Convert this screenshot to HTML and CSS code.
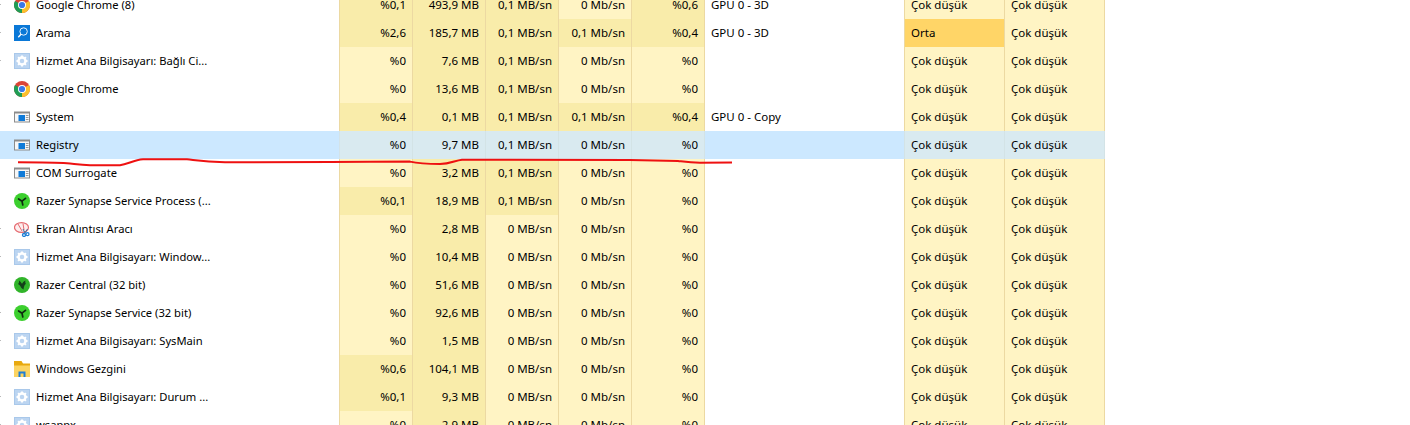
FILE: index.html
```html
<!DOCTYPE html>
<html lang="tr">
<head>
<meta charset="utf-8">
<title>Görev Yöneticisi</title>
<link rel="stylesheet" href="styles.css">
</head>
<body>
<svg class="defs" width="0" height="0" aria-hidden="true">
  <symbol id="i-chrome" viewBox="0 0 16 16">
    <circle cx="8" cy="8" r="8" fill="#db4437"/>
    <path d="M8 8 1.07 4A8 8 0 0 0 8 16Z" fill="#1f9d55"/>
    <path d="M8 8V16A8 8 0 0 0 14.93 4Z" fill="#fbc02d"/>
    <circle cx="8" cy="8" r="4" fill="#fff"/>
    <circle cx="8" cy="8" r="3.100" fill="#3b78e7"/>
  </symbol>
  <symbol id="i-search" viewBox="0 0 16 16">
    <rect width="16" height="16" fill="#0a78d7"/>
    <circle cx="9.600" cy="6.500" r="3.700" fill="none" stroke="#e6f2fc" stroke-width="1"/>
    <path d="M7 9.300 4.300 12.200" stroke="#fff" stroke-width="1.300"/>
  </symbol>
  <symbol id="i-gear" viewBox="0 0 16 16">
    <rect width="16" height="16" fill="#a9c8ea"/>
    <rect x="1" y="1" width="14" height="14" fill="#bcd5f1"/>
    <circle cx="8" cy="8" r="3.500" fill="none" stroke="#fff" stroke-width="2.400"/>
    <path d="M8 2.500V5M8 11V13.500M2.500 8H5M11 8H13.500M4.100 4.100 5.900 5.900M10.100 10.100 11.900 11.900M11.900 4.100 10.100 5.900M5.900 10.100 4.100 11.900" stroke="#fff" stroke-width="1.900"/>
  </symbol>
  <symbol id="i-window" viewBox="0 0 16 16">
    <rect y="2.500" width="16" height="11" fill="#8c8c8c"/>
    <rect x="1" y="4.500" width="14" height="8" fill="#f7f7f7"/>
    <rect x="4.500" y="6" width="6.500" height="6" fill="#0f7ad8"/>
    <path d="M11.800 6.500H14.500M11.800 8.500H14.500M11.800 10.500H14.500" stroke="#9a9a9a" stroke-width="1"/>
  </symbol>
  <symbol id="i-synapse" viewBox="0 0 16 16">
    <circle cx="8" cy="8" r="8" fill="#3ccf2e"/>
    <path d="M8 8.200 4.600 6M8 8.200 11.500 5.300M8 8.200 8.800 12" stroke="#0e2a10" stroke-width="1.700" stroke-linecap="round"/>
  </symbol>
  <symbol id="i-central" viewBox="0 0 16 16">
    <circle cx="8" cy="8" r="8" fill="#31b42a"/>
    <path d="M5 3.500C7 5 7.500 6 8 6.800 8.700 5.500 9.500 4.500 11.500 3.500 11 5 11.500 6.500 12 7 10.500 7.500 10 9 9.500 12.500 8.500 11.800 7.500 11 7 10.500 6.500 9 5.500 8 4 7 5 6 5.200 5 5 3.500Z" fill="#14401a"/>
  </symbol>
  <symbol id="i-snip" viewBox="0 0 16 16">
    <ellipse cx="7.500" cy="6.500" rx="7" ry="4.800" fill="#fdeeee" stroke="#e56a70" stroke-width="1.200"/>
    <path d="M4 3 8 10M9 2.500 10 9" stroke="#e56a70" stroke-width="1"/>
    <path d="M9 8 11 12M13.500 8 11 12" stroke="#3f6f9f" stroke-width="1"/>
    <circle cx="10" cy="14" r="1.500" fill="none" stroke="#1f7fd6" stroke-width="1.300"/>
    <circle cx="13.500" cy="13.200" r="1.500" fill="none" stroke="#1f7fd6" stroke-width="1.300"/>
  </symbol>
  <symbol id="i-folder" viewBox="0 0 16 16">
    <path d="M0 0H7.500L9 2.500H16V16H0Z" fill="#e8a90f"/>
    <rect y="4.500" width="16" height="11.500" fill="#fcd462"/>
    <path d="M4.500 16V10.500H11.500V16H9.500V12.500H6.500V16Z" fill="#1f7fd6"/>
  </symbol>
</svg>

<main class="list">
  <div class="row">
    <div class="name tick"><svg class="icon"><use href="#i-chrome"/></svg><span>Google Chrome (8)</span></div>
    <div class="num hot">%0,1</div><div class="num hot">493,9 MB</div><div class="num hot">0,1 MB/sn</div><div class="num">0 Mb/sn</div><div class="num hot">%0,6</div>
    <div class="engine">GPU 0 - 3D</div><div class="lvl">Çok düşük</div><div class="lvl end">Çok düşük</div>
  </div>
  <div class="row">
    <div class="name tick"><svg class="icon"><use href="#i-search"/></svg><span>Arama</span></div>
    <div class="num hot">%2,6</div><div class="num hot">185,7 MB</div><div class="num hot">0,1 MB/sn</div><div class="num hot">0,1 Mb/sn</div><div class="num hot">%0,4</div>
    <div class="engine">GPU 0 - 3D</div><div class="lvl mid">Orta</div><div class="lvl end">Çok düşük</div>
  </div>
  <div class="row">
    <div class="name tick"><svg class="icon"><use href="#i-gear"/></svg><span>Hizmet Ana Bilgisayarı: Bağlı Ci...</span></div>
    <div class="num">%0</div><div class="num hot">7,6 MB</div><div class="num hot">0,1 MB/sn</div><div class="num">0 Mb/sn</div><div class="num">%0</div>
    <div class="engine"></div><div class="lvl">Çok düşük</div><div class="lvl end">Çok düşük</div>
  </div>
  <div class="row">
    <div class="name"><svg class="icon"><use href="#i-chrome"/></svg><span>Google Chrome</span></div>
    <div class="num">%0</div><div class="num hot">13,6 MB</div><div class="num hot">0,1 MB/sn</div><div class="num">0 Mb/sn</div><div class="num">%0</div>
    <div class="engine"></div><div class="lvl">Çok düşük</div><div class="lvl end">Çok düşük</div>
  </div>
  <div class="row">
    <div class="name"><svg class="icon"><use href="#i-window"/></svg><span>System</span></div>
    <div class="num hot">%0,4</div><div class="num hot">0,1 MB</div><div class="num hot">0,1 MB/sn</div><div class="num hot">0,1 Mb/sn</div><div class="num hot">%0,4</div>
    <div class="engine">GPU 0 - Copy</div><div class="lvl">Çok düşük</div><div class="lvl end">Çok düşük</div>
  </div>
  <div class="row selected">
    <div class="name"><svg class="icon"><use href="#i-window"/></svg><span>Registry</span></div>
    <div class="num">%0</div><div class="num">9,7 MB</div><div class="num">0,1 MB/sn</div><div class="num">0 Mb/sn</div><div class="num">%0</div>
    <div class="engine"></div><div class="lvl">Çok düşük</div><div class="lvl end">Çok düşük</div>
  </div>
  <div class="row">
    <div class="name"><svg class="icon"><use href="#i-window"/></svg><span>COM Surrogate</span></div>
    <div class="num">%0</div><div class="num hot">3,2 MB</div><div class="num hot">0,1 MB/sn</div><div class="num">0 Mb/sn</div><div class="num">%0</div>
    <div class="engine"></div><div class="lvl">Çok düşük</div><div class="lvl end">Çok düşük</div>
  </div>
  <div class="row">
    <div class="name"><svg class="icon"><use href="#i-synapse"/></svg><span>Razer Synapse Service Process (...</span></div>
    <div class="num hot">%0,1</div><div class="num hot">18,9 MB</div><div class="num hot">0,1 MB/sn</div><div class="num">0 Mb/sn</div><div class="num">%0</div>
    <div class="engine"></div><div class="lvl">Çok düşük</div><div class="lvl end">Çok düşük</div>
  </div>
  <div class="row">
    <div class="name tick"><svg class="icon"><use href="#i-snip"/></svg><span>Ekran Alıntısı Aracı</span></div>
    <div class="num">%0</div><div class="num hot">2,8 MB</div><div class="num">0 MB/sn</div><div class="num">0 Mb/sn</div><div class="num">%0</div>
    <div class="engine"></div><div class="lvl">Çok düşük</div><div class="lvl end">Çok düşük</div>
  </div>
  <div class="row">
    <div class="name tick"><svg class="icon"><use href="#i-gear"/></svg><span>Hizmet Ana Bilgisayarı: Window...</span></div>
    <div class="num">%0</div><div class="num hot">10,4 MB</div><div class="num">0 MB/sn</div><div class="num">0 Mb/sn</div><div class="num">%0</div>
    <div class="engine"></div><div class="lvl">Çok düşük</div><div class="lvl end">Çok düşük</div>
  </div>
  <div class="row">
    <div class="name"><svg class="icon"><use href="#i-central"/></svg><span>Razer Central (32 bit)</span></div>
    <div class="num">%0</div><div class="num hot">51,6 MB</div><div class="num">0 MB/sn</div><div class="num">0 Mb/sn</div><div class="num">%0</div>
    <div class="engine"></div><div class="lvl">Çok düşük</div><div class="lvl end">Çok düşük</div>
  </div>
  <div class="row">
    <div class="name tick"><svg class="icon"><use href="#i-synapse"/></svg><span>Razer Synapse Service (32 bit)</span></div>
    <div class="num">%0</div><div class="num hot">92,6 MB</div><div class="num">0 MB/sn</div><div class="num">0 Mb/sn</div><div class="num">%0</div>
    <div class="engine"></div><div class="lvl">Çok düşük</div><div class="lvl end">Çok düşük</div>
  </div>
  <div class="row">
    <div class="name tick"><svg class="icon"><use href="#i-gear"/></svg><span>Hizmet Ana Bilgisayarı: SysMain</span></div>
    <div class="num">%0</div><div class="num hot">1,5 MB</div><div class="num">0 MB/sn</div><div class="num">0 Mb/sn</div><div class="num">%0</div>
    <div class="engine"></div><div class="lvl">Çok düşük</div><div class="lvl end">Çok düşük</div>
  </div>
  <div class="row">
    <div class="name"><svg class="icon"><use href="#i-folder"/></svg><span>Windows Gezgini</span></div>
    <div class="num hot">%0,6</div><div class="num hot">104,1 MB</div><div class="num">0 MB/sn</div><div class="num">0 Mb/sn</div><div class="num">%0</div>
    <div class="engine"></div><div class="lvl">Çok düşük</div><div class="lvl end">Çok düşük</div>
  </div>
  <div class="row">
    <div class="name tick"><svg class="icon"><use href="#i-gear"/></svg><span>Hizmet Ana Bilgisayarı: Durum ...</span></div>
    <div class="num hot">%0,1</div><div class="num hot">9,3 MB</div><div class="num">0 MB/sn</div><div class="num">0 Mb/sn</div><div class="num">%0</div>
    <div class="engine"></div><div class="lvl">Çok düşük</div><div class="lvl end">Çok düşük</div>
  </div>
  <div class="row">
    <div class="name tick"><svg class="icon"><use href="#i-gear"/></svg><span>wsappx</span></div>
    <div class="num">%0</div><div class="num hot">2,9 MB</div><div class="num">0 MB/sn</div><div class="num">0 Mb/sn</div><div class="num">%0</div>
    <div class="engine"></div><div class="lvl">Çok düşük</div><div class="lvl end">Çok düşük</div>
  </div>
</main>

<svg class="scribble" width="1410" height="425" viewBox="0 0 1410 425" aria-hidden="true">
  <path d="M18 162.300C35 162.300 55 162.300 67 163.300 75 164 80 165.200 90 165.200L120 165.200C128 164 134 160 143 159.300L187 159.300C198 160.500 205 161.800 225 162.200L330 162.100 410 161.600C416 163 425 164 440 164 450 164 455 160.500 462 159.700L630 160 678 161C686 162 690 162.700 700 162.700L732 162.500" fill="none" stroke="#ee1111" stroke-width="2"/>
</svg>
</body>
</html>
```
FILE: styles.css
```css
html, body {
  margin: 0;
  height: 425px;
  overflow: hidden;
  background: #fff;
}

body {
  position: relative;
  font-family: "Noto Sans", "Open Sans", "Liberation Sans", sans-serif;
  font-size: 11.5px;
  color: #000;
}

.defs {
  position: absolute;
}

.list {
  margin-top: -9px;
  width: 1105px;
}

.row {
  display: grid;
  grid-template-columns: 340px repeat(5, 73px) 199px 100px 101px;
  height: 28px;
  line-height: 28px;
}

.name {
  display: flex;
  align-items: center;
  gap: 6px;
  padding-left: 14px;
  font-size: 11.2px;
  border-right: 1px solid #ecd9a2;
  white-space: nowrap;
}

.tick {
  position: relative;
}

.tick::before {
  content: "";
  position: absolute;
  left: 0;
  top: 13px;
  width: 1px;
  height: 1px;
  background: #b9b9b9;
}

.icon {
  width: 16px;
  height: 16px;
  flex: none;
}

.num {
  padding-right: 6px;
  text-align: right;
  background: #fff4c4;
  border-right: 1px solid #ecd9a2;
}

.num.hot {
  background: #f9ecaa;
}

.engine {
  padding-left: 6px;
}

.lvl {
  padding-left: 6px;
  background: #fff4c4;
  border-left: 1px solid #ecd9a2;
}

.lvl.end {
  border-right: 1px solid #ecd9a2;
}

.lvl.mid {
  background: #ffd567;
}

.selected .name,
.selected .engine {
  background: #cce8ff;
}

.selected .name {
  border-right-color: #d3e3e9;
}

.selected .num,
.selected .lvl {
  background: #d9eaf0;
  border-color: #d3e3e6;
}

.scribble {
  position: absolute;
  left: 0;
  top: 0;
  pointer-events: none;
}
```
